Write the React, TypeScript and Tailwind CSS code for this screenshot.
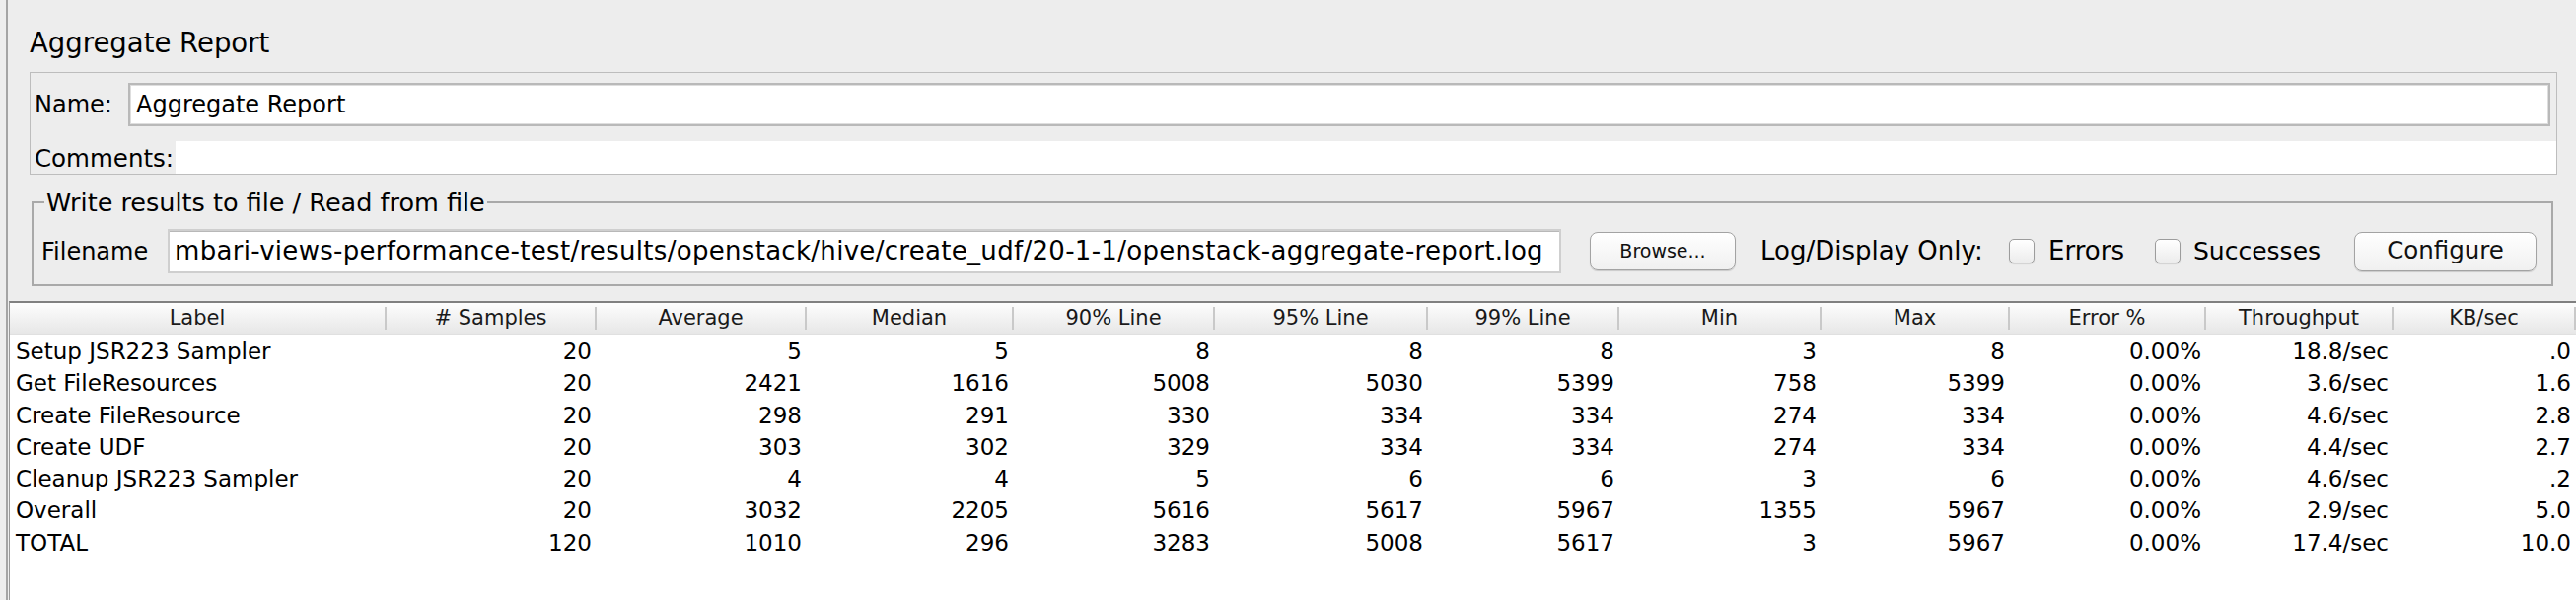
import React from 'react';

const headers = [
  'Label',
  '# Samples',
  'Average',
  'Median',
  '90% Line',
  '95% Line',
  '99% Line',
  'Min',
  'Max',
  'Error %',
  'Throughput',
  'KB/sec',
];

const rows: string[][] = [
  ['Setup JSR223 Sampler', '20', '5', '5', '8', '8', '8', '3', '8', '0.00%', '18.8/sec', '.0'],
  ['Get FileResources', '20', '2421', '1616', '5008', '5030', '5399', '758', '5399', '0.00%', '3.6/sec', '1.6'],
  ['Create FileResource', '20', '298', '291', '330', '334', '334', '274', '334', '0.00%', '4.6/sec', '2.8'],
  ['Create UDF', '20', '303', '302', '329', '334', '334', '274', '334', '0.00%', '4.4/sec', '2.7'],
  ['Cleanup JSR223 Sampler', '20', '4', '4', '5', '6', '6', '3', '6', '0.00%', '4.6/sec', '.2'],
  ['Overall', '20', '3032', '2205', '5616', '5617', '5967', '1355', '5967', '0.00%', '2.9/sec', '5.0'],
  ['TOTAL', '120', '1010', '296', '3283', '5008', '5617', '3', '5967', '0.00%', '17.4/sec', '10.0'],
];

const gridCols =
  'grid grid-cols-[382px_213px_213px_210px_204px_216px_194px_205px_191px_199px_190px_185px]';

function Checkbox() {
  return (
    <span className="block w-[26px] h-[25px] rounded-[5px] border border-[#9c9c9c] bg-linear-to-b from-white to-[#ececec] shadow-[0_1px_1px_rgba(0,0,0,0.12)]" />
  );
}

function AquaButton({ label, className }: { label: string; className: string }) {
  return (
    <button
      className={
        'flex items-center justify-center rounded-[8px] border border-[#a3a3a3] bg-linear-to-b from-white to-[#f0f0f0] text-[#111] shadow-[0_1px_1px_rgba(0,0,0,0.15)] ' +
        className
      }
    >
      {label}
    </button>
  );
}

export default function App() {
  return (
    <div className="w-[2612px] h-[608px] overflow-hidden bg-[#ededed] pl-[6px] font-['DejaVu_Sans',sans-serif] text-black">
      <div className="h-full border-l-2 border-[#a4a4a4] flex flex-col">
        {/* title */}
        <div className="pl-[22px] pt-[26px] text-[27.5px] leading-[35px]">Aggregate Report</div>

        {/* name / comments */}
        <div className="ml-[22px] mr-[19px] mt-[12px] border border-[#bdbdbd]">
          <div className="flex items-center pt-[10px] pr-[6px]">
            <span className="w-[99px] pl-[4px] text-[24px]">Name:</span>
            <div className="flex-1 h-[44px] flex items-center border-2 border-[#b9b9b9] bg-white pl-[6px] text-[24px] shadow-[inset_0_0_0_1px_#dedede]">
              Aggregate Report
            </div>
          </div>
          <div className="flex mt-[15px] h-[33px]">
            <span className="w-[147px] pl-[4px] text-[24.5px] leading-[36px]">Comments:</span>
            <div className="flex-1 bg-white" />
          </div>
        </div>

        {/* write results fieldset */}
        <fieldset className="ml-[24px] mr-[23px] mt-[13px] border-2 border-[#a9a9a9] pt-[12px] pb-[11px]">
          <legend className="ml-[11px] px-[2px] text-[25.5px] leading-[30px]">
            Write results to file / Read from file
          </legend>
          <div className="flex items-center">
            <span className="w-[136px] pl-[8px] text-[24px]">Filename</span>
            <div className="w-[1413px] h-[45px] flex items-center border-2 border-[#cfcfcf] bg-white pl-[5px] text-[26px] tracking-[0.3px] whitespace-nowrap overflow-hidden shadow-[inset_0_1px_0_#b8b8b8]">
              mbari-views-performance-test/results/openstack/hive/create_udf/20-1-1/openstack-aggregate-report.log
            </div>
            <AquaButton label="Browse..." className="ml-[29px] w-[148px] h-[39px] text-[19px]" />
            <span className="ml-[25px] w-[252px] text-[26px] whitespace-nowrap">Log/Display Only:</span>
            <Checkbox />
            <span className="ml-[14px] w-[108px] text-[26px]">Errors</span>
            <Checkbox />
            <span className="ml-[13px] w-[163px] text-[25px]">Successes</span>
            <AquaButton label="Configure" className="w-[185px] h-[40px] text-[24.5px]" />
          </div>
        </fieldset>

        {/* results table */}
        <div className="ml-[1px] mt-[15px] flex-1 border-t-2 border-l border-t-[#808080] border-l-[#9a9a9a] bg-white">
          <div className={gridCols + ' h-[32px] bg-linear-to-b from-[#fdfdfd] to-[#e7e7e7] border-b border-[#e0e0e0]'}>
            {headers.map((h) => (
              <div key={h} className="flex items-center">
                <span className="flex-1 text-center text-[21px] text-[#1a1a1a] whitespace-nowrap">{h}</span>
                <span className="w-[2px] h-[23px] bg-[#c9c9c9]" />
              </div>
            ))}
          </div>
          {rows.map((r) => (
            <div key={r[0]} className={gridCols + ' h-[32.3px] items-center text-[23px]'}>
              {r.map((c, i) => (
                <span
                  key={i}
                  className={i === 0 ? 'pl-[6px] whitespace-nowrap' : 'pr-[5px] text-right whitespace-nowrap'}
                >
                  {c}
                </span>
              ))}
            </div>
          ))}
        </div>
      </div>
    </div>
  );
}
